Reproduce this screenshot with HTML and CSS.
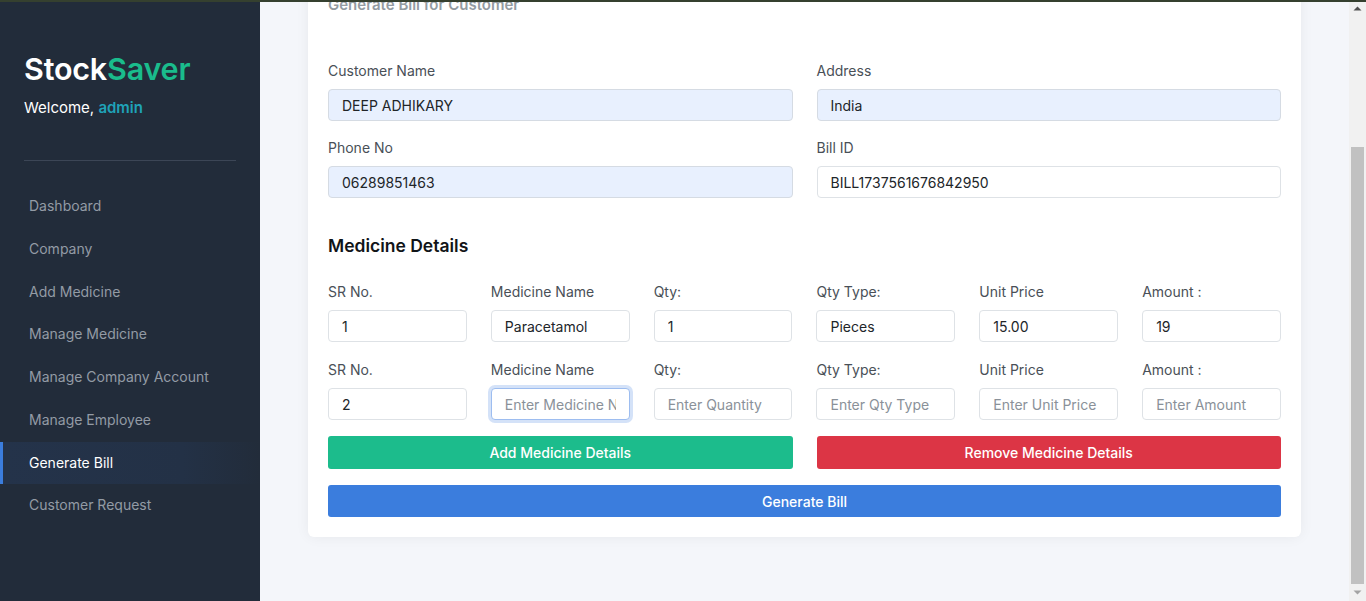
FILE: index.html
```html
<!DOCTYPE html>
<html lang="en">
<head>
<meta charset="utf-8">
<title>StockSaver - Generate Bill</title>
<link rel="stylesheet" href="styles.css">
</head>
<body>
<div class="topline"></div>
<div class="layout">
  <aside class="sidebar">
    <div class="brand">Stock<span class="brand-accent">Saver</span></div>
    <div class="welcome">Welcome, <span class="welcome-user">admin</span></div>
    <hr class="divider">
    <nav class="nav">
      <a class="nav-item" href="#">Dashboard</a>
      <a class="nav-item" href="#">Company</a>
      <a class="nav-item" href="#">Add Medicine</a>
      <a class="nav-item" href="#">Manage Medicine</a>
      <a class="nav-item" href="#">Manage Company Account</a>
      <a class="nav-item" href="#">Manage Employee</a>
      <a class="nav-item active" href="#">Generate Bill</a>
      <a class="nav-item" href="#">Customer Request</a>
    </nav>
  </aside>
  <main class="main">
    <div class="viewport">
      <div class="content">
        <div class="card">
          <h5 class="card-title">Generate Bill for Customer</h5>
          <div class="grid2">
            <div class="field">
              <label class="label">Customer Name</label>
              <input class="input filled" type="text" value="DEEP ADHIKARY">
            </div>
            <div class="field">
              <label class="label">Address</label>
              <input class="input filled" type="text" value="India">
            </div>
            <div class="field">
              <label class="label">Phone No</label>
              <input class="input filled" type="text" value="06289851463">
            </div>
            <div class="field">
              <label class="label">Bill ID</label>
              <input class="input" type="text" value="BILL1737561676842950">
            </div>
          </div>

          <h4 class="section-title">Medicine Details</h4>

          <div class="grid6">
            <div class="field"><label class="label">SR No.</label><input class="input" type="text" value="1"></div>
            <div class="field"><label class="label">Medicine Name</label><input class="input" type="text" value="Paracetamol"></div>
            <div class="field"><label class="label">Qty:</label><input class="input" type="text" value="1"></div>
            <div class="field"><label class="label">Qty Type:</label><input class="input" type="text" value="Pieces"></div>
            <div class="field"><label class="label">Unit Price</label><input class="input" type="text" value="15.00"></div>
            <div class="field"><label class="label">Amount :</label><input class="input" type="text" value="19"></div>

            <div class="field"><label class="label">SR No.</label><input class="input" type="text" value="2"></div>
            <div class="field"><label class="label">Medicine Name</label><input class="input focused" type="text" placeholder="Enter Medicine Name"></div>
            <div class="field"><label class="label">Qty:</label><input class="input" type="text" placeholder="Enter Quantity"></div>
            <div class="field"><label class="label">Qty Type:</label><input class="input" type="text" placeholder="Enter Qty Type"></div>
            <div class="field"><label class="label">Unit Price</label><input class="input" type="text" placeholder="Enter Unit Price"></div>
            <div class="field"><label class="label">Amount :</label><input class="input" type="text" placeholder="Enter Amount"></div>
          </div>

          <div class="grid2 actions">
            <button class="btn btn-green" type="button">Add Medicine Details</button>
            <button class="btn btn-red" type="button">Remove Medicine Details</button>
          </div>
          <button class="btn btn-blue btn-full" type="button">Generate Bill</button>
        </div>
      </div>
    </div>
    <div class="scrollbar" aria-hidden="true">
      <div class="sb-btn">
        <svg width="17" height="17" viewBox="0 0 17 17"><path d="M4.5 10.5 L8.5 6.5 L12.5 10.5 Z" fill="#505050"/></svg>
      </div>
      <div class="sb-space"></div>
      <div class="sb-thumb"></div>
      <div class="sb-btn">
        <svg width="17" height="17" viewBox="0 0 17 17"><path d="M4.5 6.5 L8.5 10.5 L12.5 6.5 Z" fill="#a3a3a3"/></svg>
      </div>
    </div>
  </main>
</div>
</body>
</html>
```

FILE: styles.css
```css
* {
  box-sizing: border-box;
}

html, body {
  margin: 0;
  padding: 0;
  height: 100%;
  overflow: hidden;
}

body {
  font-family: Inter, "Noto Sans", "Liberation Sans", sans-serif;
  background: #f4f6fa;
  color: #212529;
}

.topline {
  position: fixed;
  top: 0;
  left: 0;
  right: 0;
  height: 2px;
  background: #35402f;
  z-index: 10;
}

.layout {
  display: flex;
  height: 100vh;
}

/* Sidebar */
.sidebar {
  width: 260px;
  flex: 0 0 260px;
  background: #222c3a;
  padding-top: 50px;
}

.brand {
  padding: 0 24px;
  font-size: 30.5px;
  line-height: 38px;
  font-weight: 600;
  color: #ffffff;
  letter-spacing: -0.2px;
}

.brand-accent {
  color: #1abc8c;
}

.welcome {
  padding: 0 24px;
  margin-top: 8px;
  font-size: 15px;
  line-height: 24px;
  color: #ffffff;
}

.welcome-user {
  color: #1fa2b8;
  font-weight: 600;
}

.divider {
  margin: 40px 24px 0;
  border: 0;
  border-top: 1px solid #3c4656;
  height: 0;
}

.nav {
  display: flex;
  flex-direction: column;
  margin-top: 24px;
}

.nav-item {
  display: block;
  padding: 12px 26px;
  border-left: 3px solid transparent;
  font-size: 14px;
  line-height: 18.75px;
  color: #939ba5;
  text-decoration: none;
}

.nav-item.active {
  color: #ffffff;
  border-left-color: #3b7ddd;
  background: linear-gradient(90deg, #24334a 0%, #233146 70%, #222c3a 100%);
}

/* Main */
.main {
  flex: 1;
  min-width: 0;
  height: 100vh;
  display: flex;
  background: #f4f6fa;
}

.viewport {
  flex: 1;
  min-width: 0;
  height: 100%;
  overflow-y: auto;
  display: flex;
  flex-direction: column-reverse;
}

.scrollbar {
  flex: 0 0 17px;
  width: 17px;
  height: 100%;
  display: flex;
  flex-direction: column;
  background: #f1f1f1;
}

.sb-btn {
  flex: 0 0 17px;
  height: 17px;
}

.sb-btn svg {
  display: block;
}

.sb-space {
  flex: 0 0 130px;
}

.sb-thumb {
  flex: 1;
  margin: 0 2px;
  background: #c1c1c1;
}

.content {
  flex: 0 0 auto;
  padding: 152px 48px 64px;
}

.card {
  background: #ffffff;
  border-radius: 6px;
  box-shadow: 0 0 14px 0 rgba(33, 37, 41, 0.06);
  padding: 20px;
}

.card-title {
  margin: 0 0 44px;
  font-size: 15px;
  line-height: 24px;
  font-weight: 600;
  color: #939ba2;
}

.grid2 {
  display: grid;
  grid-template-columns: 1fr 1fr;
  column-gap: 24px;
  row-gap: 17px;
}

.grid6 {
  display: grid;
  grid-template-columns: repeat(6, 1fr);
  column-gap: 24px;
  row-gap: 18px;
}

.field {
  display: flex;
  flex-direction: column;
  min-width: 0;
}

.label {
  font-size: 14px;
  line-height: 20px;
  color: #495057;
  margin-bottom: 8px;
}

.input {
  width: 100%;
  height: 32px;
  border: 1px solid #dee2e6;
  border-radius: 4px;
  padding: 0 13px;
  font-family: inherit;
  font-size: 14px;
  color: #212529;
  background: #ffffff;
  outline: none;
}

.input::placeholder {
  color: #8a9199;
}

.input.filled {
  background: #e8f0fe;
  border-color: #d5dbe3;
}

.input.focused {
  border-color: #9dbdf0;
  box-shadow: 0 0 0 3px rgba(59, 125, 221, 0.22);
}

.section-title {
  margin: 35px 0 23px;
  font-size: 17.5px;
  line-height: 26px;
  font-weight: 600;
  color: #111418;
}

.actions {
  margin-top: 16px;
}

.btn {
  height: 33px;
  border: 0;
  border-radius: 3px;
  font-family: inherit;
  font-size: 14px;
  font-weight: 500;
  color: #ffffff;
  cursor: pointer;
}

.btn-green {
  background: #1cbc8c;
}

.btn-red {
  background: #dc3545;
}

.btn-blue {
  background: #3b7ddd;
}

.btn-full {
  display: block;
  width: 100%;
  height: 32px;
  margin-top: 16px;
}
```
